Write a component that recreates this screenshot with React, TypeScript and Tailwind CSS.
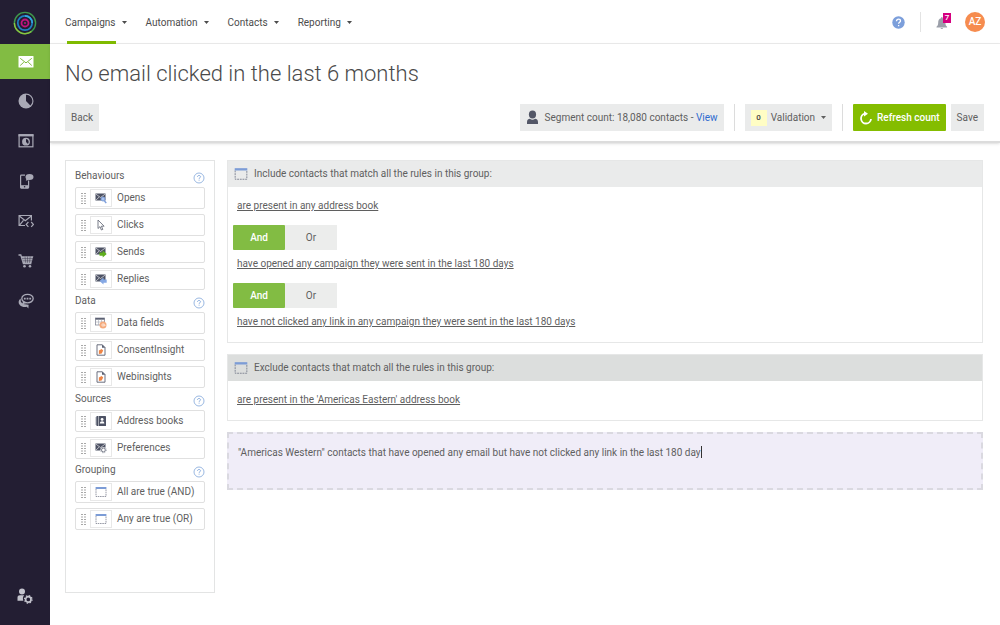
import { useState, type ReactNode } from "react";
import clsx from "clsx";

const navItems = ["Campaigns", "Automation", "Contacts", "Reporting"];

function Caret() {
  return (
    <svg width="5" height="3" viewBox="0 0 5 3" aria-hidden="true">
      <path d="M0 0h5L2.5 3z" fill="currentColor" />
    </svg>
  );
}

function Logo() {
  return (
    <svg width="24" height="24" viewBox="0 0 24 24" fill="none" aria-hidden="true">
      <circle cx="12" cy="12" r="10.6" stroke="#3f9a4c" strokeWidth="1.4" />
      <path d="M1.4 12a10.6 10.6 0 0 0 17 8.5" stroke="#8cc63f" strokeWidth="1.4" />
      <circle cx="12" cy="12" r="7.2" stroke="#1f7fc4" strokeWidth="1.7" />
      <path d="M12 4.8a7.2 7.2 0 0 1 7.2 7.2" stroke="#35a8e0" strokeWidth="1.7" />
      <circle cx="12" cy="12" r="3.5" stroke="#c4127f" strokeWidth="1.8" />
      <circle cx="12" cy="12" r="1" fill="#c4127f" />
    </svg>
  );
}

/* sidebar icons, all on a 16px grid */

const MailIcon = () => (
  <svg width="16" height="16" viewBox="0 0 16 16" fill="none" aria-hidden="true">
    <rect x="0.5" y="2" width="15" height="11.5" rx="0.6" fill="#fff" />
    <path d="M2.2 4.3 8 8.9l5.800-4.600M2.200 11.500l3.600-3.300M13.800 11.500l-3.600-3.300" stroke="#82bc43" strokeWidth="1" />
  </svg>
);

const PieIcon = () => (
  <svg width="16" height="16" viewBox="0 0 16 16" fill="none" aria-hidden="true">
    <circle cx="8" cy="8" r="7.5" fill="#a9a9b6" />
    <path d="M8 1.700V8l4.400 4.500A6.300 6.300 0 0 0 8 1.700z" fill="#231e33" />
  </svg>
);

const DashboardIcon = () => (
  <svg width="16" height="16" viewBox="0 0 16 16" fill="none" aria-hidden="true">
    <path d="M0.5 1.200h15V3.400h-15z" fill="#a9a9b6" />
    <rect x="1.100" y="1.800" width="13.800" height="12" stroke="#a9a9b6" strokeWidth="1.200" />
    <circle cx="8" cy="8.700" r="3.900" fill="#a9a9b6" />
    <path d="M8 6v3l2 1.900A3 3 0 0 0 8 6z" fill="#231e33" />
  </svg>
);

const MobileIcon = () => (
  <svg width="16" height="16" viewBox="0 0 16 16" fill="none" aria-hidden="true">
    <path d="M7 2.200H3.400a.8.8 0 0 0-.8.800v11.300c0 .5.300.8.8.8h6.400c.5 0 .8-.3.8-.8V7.500" stroke="#a9a9b6" strokeWidth="1.200" />
    <path d="M2.600 12.200h8v3h-8z" fill="#a9a9b6" />
    <circle cx="6.600" cy="13.700" r="0.800" fill="#231e33" />
    <ellipse cx="11.500" cy="4" rx="4" ry="3" fill="#a9a9b6" />
    <path d="m8.600 5-.8 2.800 3.200-1z" fill="#a9a9b6" />
  </svg>
);

const CodeMailIcon = () => (
  <svg width="16" height="16" viewBox="0 0 16 16" fill="none" stroke="#a9a9b6" strokeWidth="1.200" aria-hidden="true">
    <path d="M7 12.500H1.100V2.500h12.300v5" />
    <path d="m1.300 3 6 4.800 6-4.800M1.300 12.300l4.200-5" />
    <path d="m10.400 9-2.200 2.400 2.200 2.400M13.200 9l2.200 2.400-2.200 2.400" />
  </svg>
);

const CartIcon = () => (
  <svg width="16" height="16" viewBox="0 0 16 16" fill="none" aria-hidden="true">
    <path d="M0.500 2h2.300l2.600 8.600h8" stroke="#a9a9b6" strokeWidth="1.300" />
    <path d="M3.300 3.300h12L13.500 10h-8.300z" fill="#a9a9b6" />
    <path d="M4 5.600h11M4.600 7.800h9.800M7 3.500l.7 6.300M9.500 3.500v6.300M12.200 3.500l-.7 6.300" stroke="#231e33" strokeWidth="0.400" />
    <circle cx="6.500" cy="13.300" r="1.300" fill="#a9a9b6" />
    <circle cx="12" cy="13.300" r="1.300" fill="#a9a9b6" />
  </svg>
);

const ChatIcon = () => (
  <svg width="16" height="16" viewBox="0 0 16 16" fill="none" aria-hidden="true">
    <path d="M2.600 5.500C.2 7.500 0 10 1.800 12c2 2.200 5 2.500 7 1.700l1.600 1.800.2-3.700-5.400-.7-2.300-2z" fill="#a9a9b6" />
    <ellipse cx="9.500" cy="5.600" rx="5.700" ry="4.300" fill="#231e33" stroke="#a9a9b6" strokeWidth="1.300" />
    <path d="M5.300 8 4 11.500l4.500-1.600z" fill="#a9a9b6" />
    <path d="M5.900 5.600h1.800M8.600 5.600h1.800M11.300 5.600h1.800" stroke="#a9a9b6" strokeWidth="1.800" />
  </svg>
);

const UserSettingsIcon = () => (
  <svg width="16" height="16" viewBox="0 0 16 16" fill="none" aria-hidden="true">
    <circle cx="5" cy="3.600" r="3" fill="#c3c3cd" />
    <path d="M0.500 12.800V9.600c0-1.600 1-2.400 2.400-2.400h4.400c-.9 1-1.500 2.200-1.400 3.400 0 .8.200 1.500.5 2.200z" fill="#c3c3cd" />
    <circle cx="11.300" cy="11.400" r="2.700" stroke="#c3c3cd" strokeWidth="1.700" />
    <circle cx="11.300" cy="11.400" r="3.800" stroke="#c3c3cd" strokeWidth="1.200" strokeDasharray="1.500 1.480" />
  </svg>
);

/* palette icons, 12px grid */

function EnvelopeBase({ children }: { children?: ReactNode }) {
  return (
    <svg width="12" height="12" viewBox="0 0 12 12" fill="none" aria-hidden="true">
      <rect x="0.500" y="1.500" width="10" height="7" fill="#4d5264" />
      <path d="m1 2.200 4.500 3.300L10 2.200M1 8l3-2.800" stroke="#fff" strokeWidth="0.600" />
      {children}
    </svg>
  );
}

const OpensIcon = () => (
  <EnvelopeBase>
    <circle cx="8" cy="7" r="2" fill="#a9c3ee" stroke="#7fa0dc" strokeWidth="1" />
    <path d="m9.300 8.500 1.900 2.600" stroke="#7fa0dc" strokeWidth="1.500" />
  </EnvelopeBase>
);

const ClicksIcon = () => (
  <svg width="12" height="12" viewBox="0 0 12 12" fill="none" aria-hidden="true">
    <path d="M3 1v8.500l2-1.900 1.400 3.400 1.400-.6-1.400-3.200h2.700z" stroke="#6b6f7d" strokeWidth="0.900" />
  </svg>
);

const SendsIcon = () => (
  <EnvelopeBase>
    <path d="M4.500 6.500h3.200V4.600l4 3.500-4 3.500V9.700H4.500z" fill="#5fae1c" />
  </EnvelopeBase>
);

const RepliesIcon = () => (
  <EnvelopeBase>
    <path d="M11.700 6.500H8.500V4.600l-4 3.500 4 3.500V9.700h3.200z" fill="#85a8e4" />
  </EnvelopeBase>
);

const DataFieldsIcon = () => (
  <svg width="12" height="12" viewBox="0 0 12 12" fill="none" aria-hidden="true">
    <rect x="0.500" y="1" width="9" height="7" stroke="#858998" strokeWidth="0.800" />
    <path d="M0.500 1h9v1.700h-9z" fill="#5b6072" />
    <path d="M1 5h8.500M3.500 2.700V8M6.500 2.700V8" stroke="#a5a8b3" strokeWidth="0.600" />
    <circle cx="8" cy="8" r="3.500" fill="#f5aa7c" />
    <circle cx="8" cy="8" r="1.200" stroke="#fff" strokeWidth="0.600" />
    <path d="M9.200 6.700v1.800c0 .8 1.200.6 1.200-.6" stroke="#fff" strokeWidth="0.500" />
  </svg>
);

const InsightIcon = () => (
  <svg width="12" height="12" viewBox="0 0 12 12" fill="none" aria-hidden="true">
    <path d="M2 .8h5.300L10 3.500v7.700H2z" stroke="#5b6072" strokeWidth="0.900" />
    <path d="M7 .5 10.300 3.800H7z" fill="#5b6072" />
    <path d="M3.900 6.400 6.700 5l1.500 1.500-1.500 3-2.800.5z" fill="#ee8546" />
  </svg>
);

const AddressBookIcon = () => (
  <svg width="12" height="12" viewBox="0 0 12 12" fill="none" aria-hidden="true">
    <rect x="1.500" y="1" width="9.500" height="10" rx="0.600" fill="#4d5264" />
    <path d="M.5 3h2M.5 5h2M.5 7h2M.5 9h2" stroke="#4d5264" strokeWidth="0.900" />
    <path d="M3.500 1v10" stroke="#fff" strokeWidth="0.500" />
    <circle cx="7.100" cy="4.400" r="1.400" fill="#fff" />
    <path d="M4.900 8.600c0-1.600.8-2.300 2.200-2.300s2.200.7 2.200 2.300z" fill="#fff" />
  </svg>
);

const PreferencesIcon = () => (
  <EnvelopeBase>
    <circle cx="8.400" cy="8" r="3.100" fill="#fff" />
    <circle cx="8.400" cy="8" r="1.900" stroke="#7b7f8d" strokeWidth="1" />
    <circle cx="8.400" cy="8" r="2.800" stroke="#7b7f8d" strokeWidth="0.800" strokeDasharray="1.100 1.100" />
  </EnvelopeBase>
);

function GroupIcon({ size = 12 }: { size?: number }) {
  return (
    <svg width={size} height={size} viewBox="0 0 12 12" fill="none" aria-hidden="true" className="shrink-0">
      <path d="M1 3v7.500h10V3" stroke="#7d8291" strokeWidth="0.800" strokeDasharray="1.600 0.700" />
      <path d="M.6 1h10.800v2H.6z" fill="#7c9cd6" />
    </svg>
  );
}

const sideItems = [
  { label: "Messages", icon: <MailIcon /> },
  { label: "Reports", icon: <PieIcon /> },
  { label: "Dashboards", icon: <DashboardIcon /> },
  { label: "Mobile", icon: <MobileIcon /> },
  { label: "Transactional", icon: <CodeMailIcon /> },
  { label: "Commerce", icon: <CartIcon /> },
  { label: "Chat", icon: <ChatIcon /> },
];

const palette = [
  {
    title: "Behaviours",
    items: [
      { label: "Opens", icon: <OpensIcon /> },
      { label: "Clicks", icon: <ClicksIcon /> },
      { label: "Sends", icon: <SendsIcon /> },
      { label: "Replies", icon: <RepliesIcon /> },
    ],
  },
  {
    title: "Data",
    items: [
      { label: "Data fields", icon: <DataFieldsIcon /> },
      { label: "ConsentInsight", icon: <InsightIcon /> },
      { label: "Webinsights", icon: <InsightIcon /> },
    ],
  },
  {
    title: "Sources",
    items: [
      { label: "Address books", icon: <AddressBookIcon /> },
      { label: "Preferences", icon: <PreferencesIcon /> },
    ],
  },
  {
    title: "Grouping",
    items: [
      { label: "All are true (AND)", icon: <GroupIcon /> },
      { label: "Any are true (OR)", icon: <GroupIcon /> },
    ],
  },
];

function Sidebar() {
  return (
    <nav aria-label="Main" className="flex w-[50px] shrink-0 flex-col items-center bg-[#231e33]">
      <a href="#home" aria-label="Home" className="flex h-11 items-center pt-0.5">
        <Logo />
      </a>
      {sideItems.map((item, i) => (
        <a
          key={item.label}
          href="#section"
          aria-label={item.label}
          className={clsx(
            "flex w-full items-center justify-center pl-px",
            i === 0 ? "mb-0.5 h-[35px] bg-[#82bc43]" : "h-10",
          )}
        >
          {item.icon}
        </a>
      ))}
      <a href="#account" aria-label="Account settings" className="mt-auto mb-[21px] flex">
        <UserSettingsIcon />
      </a>
    </nav>
  );
}

function TopBar() {
  return (
    <header className="flex h-11 items-stretch border-b border-[#ececec] px-[15px]">
      <ul className="flex gap-[19px]">
        {navItems.map((item, i) => (
          <li key={item} className="flex">
            <button type="button" className="relative flex items-center gap-1.5 pt-0.5 text-[#4c4c4c]">
              {item}
              <Caret />
              {i === 0 && <span className="absolute -bottom-px left-0.5 h-[3px] w-[49px] bg-[#7fba00]" />}
            </button>
          </li>
        ))}
      </ul>
      <div className="ml-auto flex items-center">
        <button type="button" aria-label="Help" className="flex pt-0.5">
          <svg width="13" height="13" viewBox="0 0 13 13" fill="none">
            <circle cx="6.500" cy="6.500" r="6.200" fill="#7c9fdb" />
            <path d="M4.500 5.200c0-1.300.9-2 2-2s2 .7 2 1.800c0 1.300-1.900 1.400-1.900 2.700M6.600 8.900v1.300" stroke="#fff" strokeWidth="1.300" />
          </svg>
        </button>
        <span className="mx-[15px] h-5 w-px bg-[#e3e3e3]" />
        <button type="button" aria-label="7 notifications" className="relative flex pt-0.5">
          <svg width="16" height="16" viewBox="0 0 16 16" fill="none">
            <path d="M5 2.200v1C3 3.800 2.200 5.200 2.200 7.500c0 2.500-.6 3.300-1.700 4.300v.7h10.600v-.7C10 10.800 9.400 10 9.400 7.500c0-2.300-.8-3.700-2.800-4.300v-1z" fill="#9b9fa9" />
            <path d="M4.500 13h2.700a1.400 1.400 0 0 1-2.700 0z" fill="#9b9fa9" />
          </svg>
          <span className="absolute top-0 left-[7px] h-2.5 w-2 bg-[#d5007f] text-center text-[8px] leading-[10px] font-medium text-white">
            7
          </span>
        </button>
        <button
          type="button"
          aria-label="Account"
          className="ml-[13px] size-5 rounded-full bg-[#f68c4f] text-center text-[10px] font-medium text-white"
        >
          AZ
        </button>
      </div>
    </header>
  );
}

function Toolbar() {
  return (
    <section className="border-b-2 border-[#dcdcdc] pr-4 pb-2.5 pl-[15px] shadow-sm">
      <h1 className="pt-3.5 text-[22px] leading-8 font-light text-[#4a4a4a]">No email clicked in the last 6 months</h1>
      <div className="mt-3.5 flex items-center">
        <button type="button" className="h-[27px] bg-[#eaebeb] px-1.5">
          Back
        </button>
        <div className="ml-auto flex h-[27px] items-center bg-[#eaebeb] px-1.5">
          <svg width="13" height="15" viewBox="0 0 13 15" className="mr-1.5" aria-hidden="true">
            <ellipse cx="6.500" cy="4.500" rx="3.600" ry="4" fill="#535767" />
            <path d="M1 14v-2c0-2.300 1.500-3 2.900-3.200.7.700 1.700 1 2.600 1s1.900-.3 2.600-1c1.400.2 2.900.9 2.900 3.200v2z" fill="#535767" />
          </svg>
          <span>
            Segment count: 18,080 contacts -{" "}
            <a href="#contacts" className="text-[#2e6bd0]">
              View
            </a>
          </span>
        </div>
        <span className="mx-2.5 h-[27px] w-px bg-[#dcdcdc]" />
        <button type="button" className="flex h-[27px] items-center bg-[#eaebeb] px-1.5">
          <span className="mr-1 flex size-4 items-center justify-center bg-[#fffdc4] text-[8px] font-medium text-[#444]">
            0
          </span>
          Validation
          <span className="ml-1.5">
            <Caret />
          </span>
        </button>
        <span className="mx-2.5 h-[27px] w-px bg-[#dcdcdc]" />
        <button
          type="button"
          className="flex h-[27px] items-center gap-1 rounded-[1px] bg-[#84bd00] px-1.5 font-medium text-white"
        >
          <svg width="14" height="14" viewBox="0 0 14 14" fill="none" aria-hidden="true">
            <path d="M6 2.600A5 5 0 1 0 12 8" stroke="#fff" strokeWidth="1.800" />
            <path d="m5 0 4 2.800L5 5.500z" fill="#fff" />
          </svg>
          Refresh count
        </button>
        <button type="button" className="ml-[5px] h-[27px] bg-[#eaebeb] px-1.5">
          Save
        </button>
      </div>
    </section>
  );
}

function Grip() {
  return (
    <svg width="5" height="11" viewBox="0 0 5 11" className="shrink-0" aria-hidden="true">
      <path d="M1 0v11M4 0v11" stroke="#6f6f6f" strokeWidth="1.200" strokeDasharray="1 1.500" />
    </svg>
  );
}

function Palette() {
  return (
    <aside className="w-[150px] shrink-0 self-start border border-[#e3e4e4] px-[9px] pt-1 pb-[62px]">
      {palette.map((section) => (
        <section key={section.title}>
          <div className="flex h-[22px] justify-between">
            <h2 className="pt-px leading-5">{section.title}</h2>
            <button type="button" aria-label={`Help: ${section.title}`} className="mt-1">
              <svg width="12" height="12" viewBox="0 0 12 12" fill="none">
                <circle cx="6" cy="6" r="5" stroke="#8fb0de" strokeWidth="0.900" />
                <path d="M4.500 4.900c0-.9.600-1.400 1.500-1.400s1.500.5 1.500 1.300c0 .9-1.400 1-1.400 2M6.100 7.700v.9" stroke="#7ba1d8" strokeWidth="0.900" />
              </svg>
            </button>
          </div>
          <ul className="space-y-[5px]">
            {section.items.map((item) => (
              <li
                key={item.label}
                draggable
                className="flex h-[22px] cursor-move items-center rounded-xs border border-[#e0e0e0] bg-white pl-[5px]"
              >
                <Grip />
                <span className="mr-[5px] ml-1 flex h-[18px] w-[22px] shrink-0 items-center justify-center border border-[#e8e8e8]">
                  {item.icon}
                </span>
                {item.label}
              </li>
            ))}
          </ul>
        </section>
      ))}
    </aside>
  );
}

function Operator() {
  const [value, setValue] = useState("And");

  return (
    <div className="mt-[9px] mb-1 ml-[5px] flex h-[25px] w-[104px] bg-[#ecedec]">
      {["And", "Or"].map((op) => (
        <button
          key={op}
          type="button"
          aria-pressed={value === op}
          onClick={() => setValue(op)}
          className={clsx("flex-1", value === op && "rounded-[1px] bg-[#82bc43] font-medium text-white")}
        >
          {op}
        </button>
      ))}
    </div>
  );
}

function RuleGroup({ title, rules, exclude }: { title: string; rules: string[]; exclude?: boolean }) {
  return (
    <section className="border border-[#e6e7e7] pb-2.5">
      <h2 className={clsx("flex h-[26px] items-center gap-1.5 px-1.5", exclude ? "bg-[#dcdedd]" : "bg-[#eaebeb]")}>
        <GroupIcon size={14} />
        {title}
      </h2>
      <div className="pt-[9px]">
        {rules.map((rule, i) => (
          <div key={rule}>
            {i > 0 && <Operator />}
            <a href="#rule" className="ml-[9px] block leading-5 underline">
              {rule}
            </a>
          </div>
        ))}
      </div>
    </section>
  );
}

export default function App() {
  const [prompt, setPrompt] = useState(
    '"Americas Western" contacts that have opened any email but have not clicked any link in the last 180 day',
  );

  return (
    <div className="flex min-h-screen bg-white font-[Roboto,sans-serif] text-[10px] leading-4 text-[#5f5f5f]">
      <Sidebar />
      <div className="min-w-0 flex-1">
        <TopBar />
        <Toolbar />
        <main className="flex gap-3 pt-[17px] pr-[17px] pl-[15px]">
          <Palette />
          <div className="flex min-w-0 flex-1 flex-col gap-[11px]">
            <RuleGroup
              title="Include contacts that match all the rules in this group:"
              rules={[
                "are present in any address book",
                "have opened any campaign they were sent in the last 180 days",
                "have not clicked any link in any campaign they were sent in the last 180 days",
              ]}
            />
            <RuleGroup
              exclude
              title="Exclude contacts that match all the rules in this group:"
              rules={["are present in the 'Americas Eastern' address book"]}
            />
            <div className="flex h-[58px] items-start border-2 border-dashed border-[#dad9e0] bg-[#f0edf8] px-[9px] pt-2">
              <input
                aria-label="Describe your segment"
                value={prompt}
                onChange={(e) => setPrompt(e.target.value)}
                className="h-5 field-sizing-content caret-transparent outline-none"
              />
              <span className="mt-1 h-3 w-px bg-[#333]" />
            </div>
          </div>
        </main>
      </div>
    </div>
  );
}
